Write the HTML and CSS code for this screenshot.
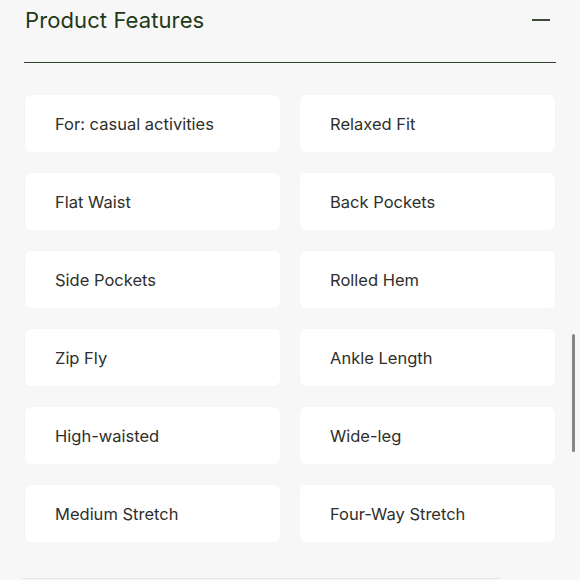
FILE: index.html
```html
<!DOCTYPE html>
<html lang="en">
<head>
<meta charset="utf-8">
<title>Product Features</title>
<link rel="stylesheet" href="styles.css">
</head>
<body>
<div class="page">
  <section class="features">
    <header class="features-header">
      <h2 class="features-title">Product Features</h2>
      <span class="collapse-icon" aria-label="Collapse"></span>
    </header>
    <ul class="feature-grid">
      <li class="feature-card">For: casual activities</li>
      <li class="feature-card">Relaxed Fit</li>
      <li class="feature-card">Flat Waist</li>
      <li class="feature-card">Back Pockets</li>
      <li class="feature-card">Side Pockets</li>
      <li class="feature-card">Rolled Hem</li>
      <li class="feature-card">Zip Fly</li>
      <li class="feature-card">Ankle Length</li>
      <li class="feature-card">High-waisted</li>
      <li class="feature-card">Wide-leg</li>
      <li class="feature-card">Medium Stretch</li>
      <li class="feature-card">Four-Way Stretch</li>
    </ul>
  </section>
  <div class="next-divider"></div>
</div>
<div class="scrollbar"></div>
</body>
</html>
```
FILE: styles.css
```css
html, body {
  margin: 0;
  padding: 0;
  height: 100%;
  overflow: hidden;
}
body {
  background: #f7f7f7;
  font-family: "Inter", "Liberation Sans", sans-serif;
}
.page {
  padding: 0 24px 0 24px;
}
.features-header {
  display: flex;
  align-items: flex-start;
  justify-content: space-between;
  height: 62px;
  border-bottom: 1.5px solid #2e3f2a;
}
.features-title {
  margin: 7px 0 0 1px;
  font-size: 22px;
  font-weight: 400;
  color: #1f3a18;
  letter-spacing: 0.1px;
}
.collapse-icon {
  display: block;
  width: 18px;
  height: 2px;
  background: #3d4a3a;
  margin: 19px 6px 0 0;
}
.feature-grid {
  list-style: none;
  margin: 32px 1px 0 1px;
  padding: 0;
  display: grid;
  grid-template-columns: 1fr 1fr;
  column-gap: 20px;
  row-gap: 21px;
}
.feature-card {
  background: #ffffff;
  border-radius: 6px;
  height: 57px;
  display: flex;
  align-items: center;
  padding: 0 30px;
  font-size: 16.5px;
  color: #2f302c;
  box-shadow: 0 0 2px rgba(0, 0, 0, 0.03);
}
.next-divider {
  margin: 36px 56px 0 -2px;
  border-top: 1px solid #e6e6e6;
}
.scrollbar {
  position: fixed;
  right: 5px;
  top: 334px;
  width: 3px;
  height: 118px;
  border-radius: 2px;
  background: #858585;
}
```
